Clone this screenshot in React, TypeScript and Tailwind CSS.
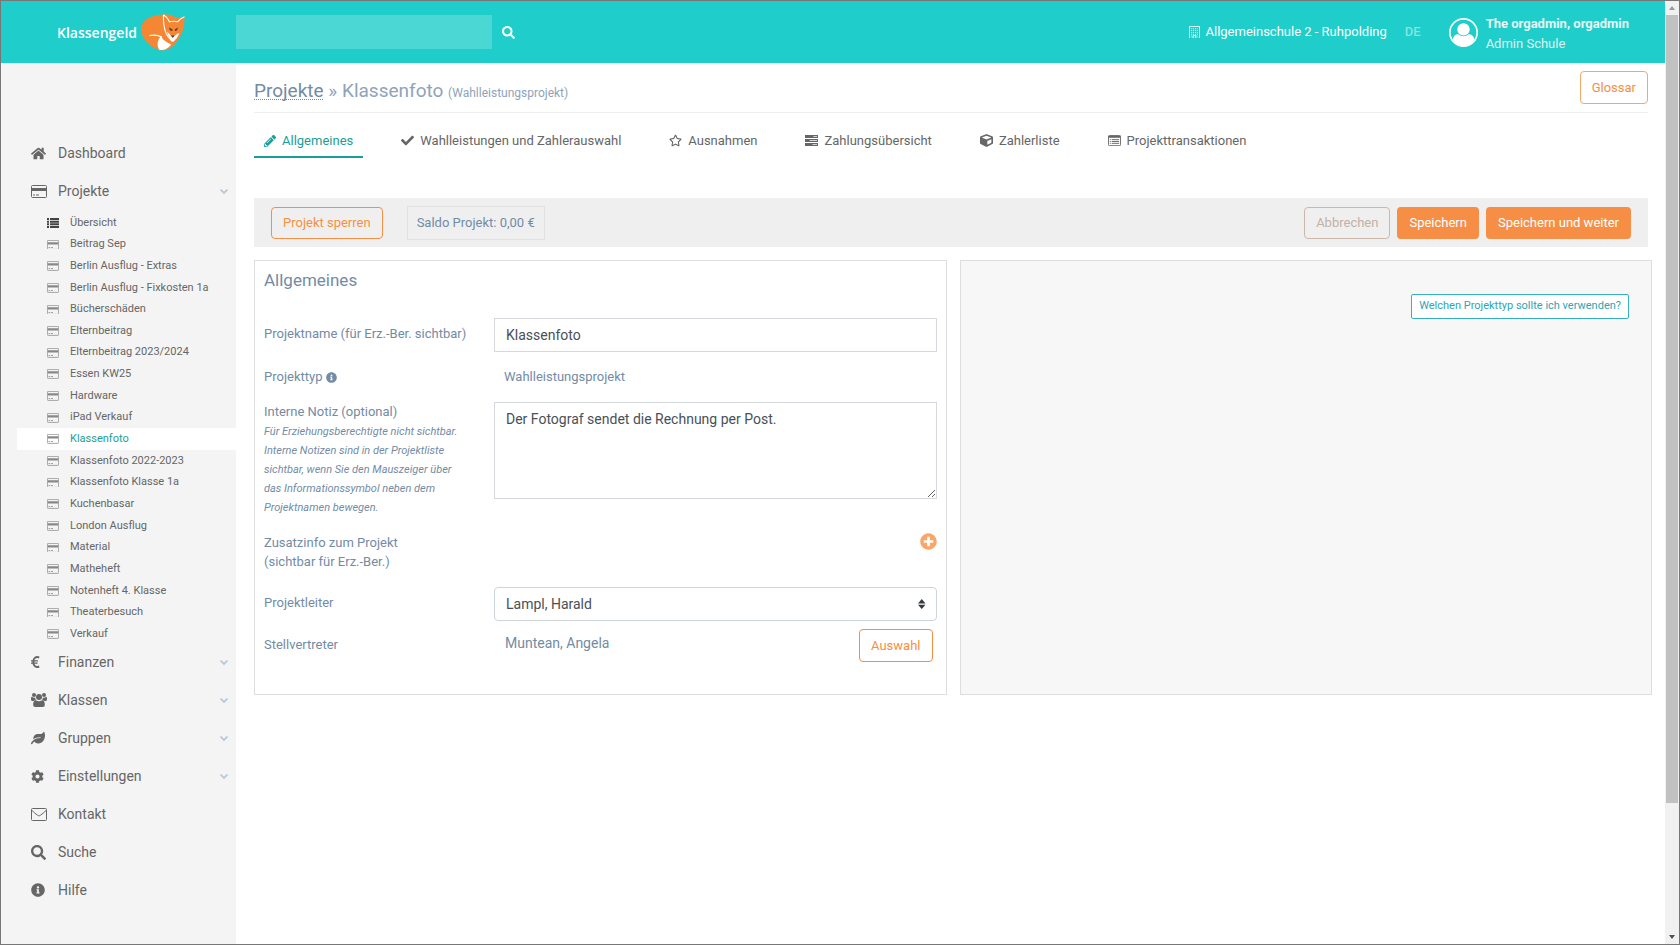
import React, { useState } from "react";
import {
  FaCheck,
  FaCog,
  FaCube,
  FaHome,
  FaInfoCircle,
  FaLeaf,
  FaPencilAlt,
  FaPlusCircle,
  FaRegStar,
  FaSearch,
} from "react-icons/fa";

type IconProps = { className?: string };

const CardIcon = ({ className }: IconProps) => (
  <svg viewBox="0 0 16 13" fill="none" className={className}>
    <rect x="0.5" y="0.5" width="15" height="12" rx="1" stroke="currentColor" />
    <path d="M1 3h14v3H1z" fill="currentColor" />
    <path d="M2 10h2M5 10h3" stroke="currentColor" />
  </svg>
);

const ListIcon = ({ className }: IconProps) => (
  <svg viewBox="0 0 12 10" fill="currentColor" className={className}>
    <path d="M0 0h2v2H0zM3 0h9v2H3zM0 2.700h2v2H0zM3 2.700h9v2H3zM0 5.300h2v2H0zM3 5.300h9v2H3zM0 8h2v2H0zM3 8h9v2H3z" />
  </svg>
);

const EuroIcon = ({ className }: IconProps) => (
  <svg viewBox="0 0 9 12" fill="none" stroke="currentColor" className={className}>
    <path d="M8.200 1.500C5 .2 2.300 2 2.300 6s2.700 5.800 5.900 4.500" strokeWidth="1.900" />
    <path d="M0 4.900h7M0 7.100h6.500" strokeWidth="1.200" />
  </svg>
);

const UsersIcon = ({ className }: IconProps) => (
  <svg viewBox="0 0 16 14" fill="currentColor" className={className}>
    <circle cx="3" cy="2" r="2" />
    <circle cx="13" cy="2" r="2" />
    <circle cx="8" cy="4" r="3" />
    <path d="M0 6c0-2 .6-2.500 1.300-2 1 .8 2 .8 3 .4-.2 1.200.2 2 .8 2.800C3.800 7.200 3 7.600 2.500 8H1.500C.5 8 0 7.400 0 6zM16 6c0-2-.6-2.500-1.300-2-1 .8-2 .8-3 .4.200 1.200-.2 2-.8 2.800 1.300 0 2.100.4 2.600.8h1c1 0 1.500-.6 1.500-2z" />
    <path d="M2.200 12c0-3 .8-5 2.800-4.800 1.800 1.400 4.200 1.400 6 0 2-.2 2.800 1.800 2.800 4.800 0 1.200-.8 2-2 2H4.200c-1.200 0-2-.8-2-2z" />
  </svg>
);

const EnvelopeIcon = ({ className }: IconProps) => (
  <svg viewBox="0 0 16 13" fill="none" stroke="currentColor" className={className}>
    <rect x="0.500" y="0.500" width="15" height="12" rx="1" />
    <path d="M1 2.500c1.500 1.800 3.800 3.300 5.500 4.700 1 .8 2 .8 3 0C11.200 5.800 13.500 4.300 15 2.500" />
  </svg>
);

const TasksIcon = ({ className }: IconProps) => (
  <svg viewBox="0 0 14 12" fill="currentColor" className={className}>
    <path d="M0 0h14v3.300H0zM0 4.200h14v3.300H0zM0 8.500h14v3.300H0z" />
    <path d="M9 1.200h4v1H9zM5 5.400h8v1H5zM8 9.700h5v1H8z" fill="#fff" opacity="0.700" />
  </svg>
);

const ListAltIcon = ({ className }: IconProps) => (
  <svg viewBox="0 0 14 12" fill="none" className={className}>
    <rect x="0.500" y="0.500" width="13" height="11" rx="1" stroke="currentColor" />
    <path d="M0.500 1h13v2h-13z" fill="currentColor" />
    <path d="M2 5h1M4 5h8M2 7h1M4 7h8M2 9h1M4 9h8" stroke="currentColor" />
  </svg>
);

const BuildingIcon = ({ className }: IconProps) => (
  <svg viewBox="0 0 12 14" fill="none" stroke="currentColor" className={className}>
    <path d="M0.500 0.500h11v13h-11z" />
    <path d="M2.500 3h7.500M2.500 5h7.500M2.500 7h7.500M2.500 9h7.500" strokeDasharray="1 1" />
    <path d="M2.500 11h1M8.500 11h1M4.500 13.500v-3h3v3" />
  </svg>
);

const UserIcon = ({ className }: IconProps) => (
  <svg viewBox="0 0 28 28" className={className}>
    <circle cx="14" cy="14" r="13.200" fill="none" stroke="currentColor" strokeWidth="1.600" />
    <circle cx="14" cy="11" r="6" fill="currentColor" />
    <path d="M3.500 20.500c1-3.500 3-5 5.500-4.800 3 2.400 7 2.400 10 0 2.500-.2 4.500 1.300 5.500 4.800C22.500 24.800 18.500 27 14 27S5.500 24.800 3.500 20.500z" fill="currentColor" />
  </svg>
);

const ChevronIcon = ({ className }: IconProps) => (
  <svg viewBox="0 0 8 5" fill="none" stroke="currentColor" strokeWidth="1.800" className={className}>
    <path d="M0.500 0.500 4 4 7.500 0.500" />
  </svg>
);

const FoxLogo = ({ className }: IconProps) => (
  <svg viewBox="0 0 44 37" className={className}>
    <path d="M22 .5c8-.6 11 1.500 13.500 3.500 2.500 0 5-.5 8-1.500C44 11 42 19 37 26c-4 6-9 10.500-15 10.500C12 36.500 0 25 0 15 0 6 10 1 22 .5z" fill="#f58634" />
    <path d="M22.500.8c-.3 7 .3 13 2.500 18.500 1.500 3.500 4 6 6 8M22.500.8c2.500 1.500 4.500 4 6 7 3-.8 5.500-.8 8 0 1.500-2 3.500-3.700 7-5" fill="none" stroke="#fff" strokeWidth="1.100" />
    <path d="M8.500 21.500c5-.8 9-.5 12 1.500" fill="none" stroke="#fff" strokeWidth="1.200" />
    <path d="M18.500 36c-3-4-2.500-10 1.800-14 1.200 4.500 5.700 6 9.700 8.500-2 3.500-6.500 6-11.500 5.500z" fill="#fff" />
    <path d="M26 17.500c2 1.200 3 4.500 5.500 5.500 2.500-.8 4-3.200 7-4-1.500 4-4 7-6.500 9-2.800-2.500-5-6-6-10.500z" fill="#fff" />
    <path d="M28 13.500l3.500 2-.3 1.500-2.200-.8zM37 13.500l-3.200 2 .2 1.500 2-.8zM30 21.500h3.500L31.800 24z" fill="#4a3a35" />
  </svg>
);

const projects = [
  "Beitrag Sep",
  "Berlin Ausflug - Extras",
  "Berlin Ausflug - Fixkosten 1a",
  "Bücherschäden",
  "Elternbeitrag",
  "Elternbeitrag 2023/2024",
  "Essen KW25",
  "Hardware",
  "iPad Verkauf",
  "Klassenfoto",
  "Klassenfoto 2022-2023",
  "Klassenfoto Klasse 1a",
  "Kuchenbasar",
  "London Ausflug",
  "Material",
  "Matheheft",
  "Notenheft 4. Klasse",
  "Theaterbesuch",
  "Verkauf",
];

const tabs = [
  { label: "Allgemeines", icon: <FaPencilAlt className="size-3" /> },
  { label: "Wahlleistungen und Zahlerauswahl", icon: <FaCheck className="size-[13px]" /> },
  { label: "Ausnahmen", icon: <FaRegStar className="size-[13px]" /> },
  { label: "Zahlungsübersicht", icon: <TasksIcon className="w-[13px]" /> },
  { label: "Zahlerliste", icon: <FaCube className="size-[13px]" /> },
  { label: "Projekttransaktionen", icon: <ListAltIcon className="w-[13px]" /> },
];

type NavItemProps = { icon: React.ReactNode; label: string; expandable?: boolean };

const NavItem = ({ icon, label, expandable }: NavItemProps) => (
  <a href="#" className="flex h-[38px] items-center pl-[30px] pr-2 text-[14px] text-[#666]">
    <span className="w-[27px]">{icon}</span>
    <span className="flex-1">{label}</span>
    {expandable && <ChevronIcon className="w-2 text-[#b8cadb]" />}
  </a>
);

const Header = () => (
  <header className="flex h-[62px] items-center bg-[#1fcdca] text-white">
    <a href="#" className="flex w-[235px] shrink-0 items-center gap-1 pl-14">
      <span className="font-['Open_Sans'] text-[14px] font-semibold">Klassengeld</span>
      <FoxLogo className="h-[37px]" />
    </a>
    <form className="flex flex-1 items-center gap-2.5" onSubmit={(e) => e.preventDefault()}>
      <input type="search" aria-label="Suchbegriff" className="h-[34px] w-64 bg-[#4bd8d4] px-3 outline-none" />
      <button aria-label="Suchen">
        <FaSearch className="size-[13px]" />
      </button>
    </form>
    <div className="flex items-center pr-9">
      <BuildingIcon className="mr-1.5 w-[11px]" />
      <span>Allgemeinschule 2 - Ruhpolding</span>
      <button className="ml-[18px] font-medium text-[#84e4e0]">DE</button>
      <UserIcon className="ml-7 size-[29px]" />
      <div className="ml-2 pt-1 leading-5">
        <p className="font-bold text-[#e8f6f5]">The orgadmin, orgadmin</p>
        <p className="text-[#e0f0ef]">Admin Schule</p>
      </div>
    </div>
  </header>
);

const Sidebar = () => (
  <nav className="w-[235px] shrink-0 bg-[#f4f4f4] pt-[71px]">
    <NavItem icon={<FaHome className="size-[15px]" />} label="Dashboard" />
    <NavItem icon={<CardIcon className="w-4" />} label="Projekte" expandable />
    <ul className="-mb-0.5 grid h-[435px] auto-rows-fr pt-0.5 text-[11px] text-[#666]">
      <li className="ml-4">
        <a href="#" className="flex h-full items-center pl-[30px]">
          <ListIcon className="mr-[11px] w-3 text-[#444]" />
          Übersicht
        </a>
      </li>
      {projects.map((name) => (
        <li key={name} className={name === "Klassenfoto" ? "ml-4 bg-white text-[#1a9e98]" : "ml-4"}>
          <a href="#" className="flex h-full items-center pl-[30px]">
            <CardIcon className="mr-[11px] w-3 text-[#888]" />
            {name}
          </a>
        </li>
      ))}
    </ul>
    <NavItem icon={<EuroIcon className="h-3" />} label="Finanzen" expandable />
    <NavItem icon={<UsersIcon className="w-4" />} label="Klassen" expandable />
    <NavItem icon={<FaLeaf className="size-3.5" />} label="Gruppen" expandable />
    <NavItem icon={<FaCog className="size-[13px]" />} label="Einstellungen" expandable />
    <NavItem icon={<EnvelopeIcon className="w-4" />} label="Kontakt" />
    <NavItem icon={<FaSearch className="size-[15px]" />} label="Suche" />
    <NavItem icon={<FaInfoCircle className="size-3.5" />} label="Hilfe" />
  </nav>
);

const ProjectForm = () => {
  const [name, setName] = useState("Klassenfoto");
  const [note, setNote] = useState("Der Fotograf sendet die Rechnung per Post.");

  return (
    <section className="border border-[#dedede] px-[9px] pb-8 text-[#738ba5]">
      <h2 className="mt-[7px] text-[17px] leading-6">Allgemeines</h2>
      <div className="mt-[26px] grid grid-cols-[230px_1fr]">
        <label htmlFor="name" className="pt-1.5 leading-5">Projektname (für Erz.-Ber. sichtbar)</label>
        <input
          id="name"
          value={name}
          onChange={(e) => setName(e.target.value)}
          className="h-[34px] border border-[#d5d9dd] px-[11px] text-[14px] text-[#495057]"
        />

        <p className="mt-[15px] flex items-center gap-1 leading-5">
          Projekttyp <FaInfoCircle className="size-[11px]" />
        </p>
        <p className="mt-[15px] pl-[10px] leading-5">Wahlleistungsprojekt</p>

        <div className="mt-[15px]">
          <label htmlFor="note" className="block leading-5">Interne Notiz (optional)</label>
          <p className="w-[205px] text-[11px] italic leading-[19px]">
            Für Erziehungsberechtigte nicht sichtbar. Interne Notizen sind in der Projektliste sichtbar, wenn Sie den
            Mauszeiger über das Informationssymbol neben dem Projektnamen bewegen.
          </p>
        </div>
        <textarea
          id="note"
          value={note}
          onChange={(e) => setNote(e.target.value)}
          className="mt-[15px] h-[97px] border border-[#d5d9dd] px-[11px] py-1.5 text-[14px] leading-5 text-[#495057]"
        />

        <p className="mt-4 leading-[19px]">
          Zusatzinfo zum Projekt
          <br />
          (sichtbar für Erz.-Ber.)
        </p>
        <button aria-label="Zusatzinfo hinzufügen" className="mt-4 self-start justify-self-end text-[#f9a668]">
          <FaPlusCircle className="size-[17px]" />
        </button>

        <label htmlFor="leader" className="mt-4 pt-1.5 leading-5">Projektleiter</label>
        <div className="relative mt-4">
          <select
            id="leader"
            className="h-[34px] w-full appearance-none rounded-sm border border-[#ced4da] bg-white px-[11px] text-[14px] text-[#495057]"
          >
            <option>Lampl, Harald</option>
          </select>
          <svg viewBox="0 0 6 8" fill="#343a40" className="pointer-events-none absolute right-[11px] top-3 h-2.5">
            <path d="M3 0l3 3.500H0zM3 8L0 4.500h6z" />
          </svg>
        </div>

        <p className="mt-2 pt-1.5 leading-5">Stellvertreter</p>
        <div className="mt-2 flex items-start justify-between pl-[11px] pr-1">
          <p className="pt-1 text-[14px] leading-5">Muntean, Angela</p>
          <button className="h-[33px] rounded-sm border border-[#f68f45] px-[11px] text-[#f68f45]">Auswahl</button>
        </div>
      </div>
    </section>
  );
};

const App = () => (
  <div className="flex min-h-screen border border-[#777] bg-white font-['Roboto',sans-serif] text-[13px]">
    <div className="flex flex-1 flex-col">
      <Header />
      <div className="flex flex-1">
        <Sidebar />
        <main className="flex-1 pl-[18px] pr-[17px]">
          <div className="flex h-[50px] items-start justify-between border-b border-[#eee] pt-2">
            <h1 className="pt-2 text-[19px] leading-6 text-[#8fa3ba]">
              <a
                href="#"
                className="text-[#738ba5] underline decoration-dotted decoration-1 underline-offset-2 [text-decoration-skip-ink:none]"
              >
                Projekte
              </a>{" "}
              » Klassenfoto <small className="text-[12px]">(Wahlleistungsprojekt)</small>
            </h1>
            <button className="h-[33px] rounded-sm border border-[#f9a668] px-[11px] text-[#f68f45]">Glossar</button>
          </div>

          <div className="mt-3 flex gap-7 text-[#666]">
            {tabs.map((tab, i) => (
              <a
                key={tab.label}
                href="#"
                className={
                  i === 0
                    ? "flex h-[33px] items-center gap-1.5 border-b-2 border-[#1a9e98] px-2.5 text-[#1a9e98]"
                    : "flex h-[33px] items-center gap-1.5 border-b-2 border-transparent px-2.5"
                }
              >
                {tab.icon}
                {tab.label}
              </a>
            ))}
          </div>

          <div className="mt-10 flex h-[49px] items-center bg-[#efefef] px-[17px]">
            <button className="h-8 rounded-sm border border-[#f68f45] px-[11px] text-[#f68f45]">Projekt sperren</button>
            <p className="ml-6 border border-[#dfe2e5] px-[9px] py-1.5 leading-5 text-[#738ba5]">
              Saldo Projekt: 0,00 €
            </p>
            <div className="ml-auto flex gap-[7px]">
              <button className="h-8 rounded-sm border border-[#ccb8ab] px-[11px] text-[#c2b1a6]">Abbrechen</button>
              <button className="h-8 rounded-sm bg-[#f68f45] px-3 text-white">Speichern</button>
              <button className="h-8 rounded-sm bg-[#f68f45] px-3 text-white">Speichern und weiter</button>
            </div>
          </div>

          <div className="-mr-1 mt-[13px] grid grid-cols-2 gap-[13px]">
            <ProjectForm />
            <aside className="border border-[#dedede] bg-[#f7f7f7] pr-[22px] pt-[33px] text-right">
              <button className="h-[25px] rounded-xs border border-[#35b0c0] bg-white px-[7px] text-[11px] text-[#2ea5b5]">
                Welchen Projekttyp sollte ich verwenden?
              </button>
            </aside>
          </div>
        </main>
      </div>
    </div>

    {/* Scrollbar */}
    <div className="flex w-3.5 flex-col items-center bg-[#f1f1f1]">
      <svg viewBox="0 0 6 4" fill="#999" className="my-[5px] h-1">
        <path d="M3 0l3 4H0z" />
      </svg>
      <div className="h-[788px] w-3 bg-[#c1c1c1]" />
      <svg viewBox="0 0 6 4" fill="#505050" className="mb-[5px] mt-auto h-1">
        <path d="M3 4L0 0h6z" />
      </svg>
    </div>
  </div>
);

export default App;
